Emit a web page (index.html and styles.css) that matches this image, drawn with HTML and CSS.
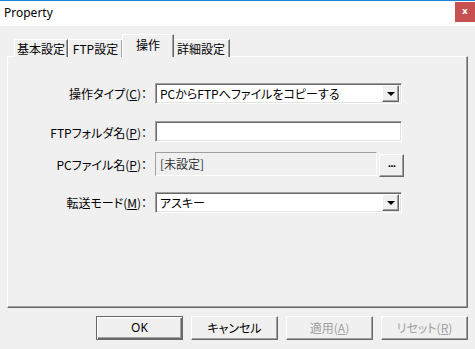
FILE: index.html
```html
<!DOCTYPE html>
<html lang="ja">
<head>
<meta charset="utf-8">
<link rel="stylesheet" href="styles.css">
</head>
<body>
<div class="window">
  <div class="titlebar">
    <span class="title">Property</span>
    <span class="close">x</span>
  </div>
  <div class="client">
    <div class="tabs">
      <div class="tab t1">基本設定</div>
      <div class="tab t2">FTP設定</div>
      <div class="tab active">操作</div>
      <div class="tab t4">詳細設定</div>
    </div>
    <div class="panel">
      <div class="row r1">
        <div class="label">操作タイプ(<u>C</u>)：</div>
        <div class="combo"><span class="val">PCからFTPへファイルをコピーする</span><span class="drop"><i></i></span></div>
      </div>
      <div class="row r2">
        <div class="label">FTPフォルダ名(<u>P</u>)：</div>
        <div class="edit"></div>
      </div>
      <div class="row r3">
        <div class="label">PCファイル名(<u>P</u>)：</div>
        <div class="readonly">[未設定]</div>
        <div class="browse"><span>...</span></div>
      </div>
      <div class="row r4">
        <div class="label">転送モード(<u>M</u>)：</div>
        <div class="combo"><span class="val">アスキー</span><span class="drop"><i></i></span></div>
      </div>
    </div>
    <div class="buttons">
      <div class="btn default">OK</div>
      <div class="btn">キャンセル</div>
      <div class="btn disabled">適用(<u>A</u>)</div>
      <div class="btn disabled">リセット(<u>R</u>)</div>
    </div>
  </div>
</div>
</body>
</html>
```

FILE: styles.css
```css
* { box-sizing: border-box; }
html, body { margin: 0; padding: 0; }
body {
  width: 475px;
  height: 349px;
  overflow: hidden;
  font-family: "Noto Sans CJK JP", "Noto Sans", sans-serif;
  font-size: 12px;
  color: #000;
  font-feature-settings: "palt";
}
.window { width: 475px; height: 349px; background: #f0f0f0; }
.titlebar {
  height: 26px;
  border-top: 1px solid #1883d7;
  background: #fff;
  display: flex;
  align-items: flex-start;
}
.title {
  font-family: "Noto Sans", "Open Sans", sans-serif;
  font-size: 12px;
  margin-left: 4px;
  margin-top: 3px;
  line-height: 18px;
}
.close {
  margin-left: auto;
  margin-top: 1px;
  width: 20px;
  height: 20px;
  background: #c75050;
  color: #fff;
  font-family: "DejaVu Sans", sans-serif;
  font-weight: bold;
  font-size: 9px;
  line-height: 19px;
  text-align: center;
}
.client { padding-left: 7px; }
.tabs {
  display: flex;
  align-items: flex-end;
  height: 23px;
  margin-top: 8px;
  padding-left: 7px;
  margin-bottom: -1px;
  position: relative;
  z-index: 1;
}
.tab {
  height: 18px;
  border-top: 1px solid #fff;
  border-left: 1px solid #fff;
  border-right: 1px solid #696969;
  box-shadow: inset -1px 0 #a0a0a0;
  line-height: 17px;
  text-align: center;
  background: #f0f0f0;
}
.t1 { width: 54px; }
.t2 { width: 55px; margin-right: -1px; }
.active {
  width: 52px;
  height: 23px;
  line-height: 19px;
  position: relative;
  z-index: 2;
  margin-right: -2px;
}
.t4 { width: 58px; }
.panel {
  width: 461px;
  height: 252px;
  border-top: 1px solid #fff;
  border-left: 1px solid #fff;
  border-right: 1px solid #696969;
  border-bottom: 1px solid #696969;
  box-shadow: inset -1px -1px #a0a0a0;
  padding-top: 25px;
  display: flex;
  flex-direction: column;
}
.row {
  display: flex;
  align-items: center;
}
.r1 { height: 22px; }
.r2 { height: 21px; margin-top: 17px; }
.r3 { height: 24px; margin-top: 10px; align-items: flex-start; }
.r4 { height: 22px; margin-top: 15px; }
.label {
  width: 139px;
  margin-right: 8px;
  text-align: right;
  line-height: 16px;
  padding-top: 2px;
  white-space: nowrap;
}
.r3 .label { padding-top: 5px; }
.combo, .edit {
  width: 247px;
  height: 21px;
  background: #fff;
  border: 1px solid;
  border-color: #a0a0a0 #fff #fff #a0a0a0;
  box-shadow: inset 1px 1px #696969, inset -1px -1px #e3e3e3;
  display: flex;
  align-items: center;
}
.val { padding-left: 4px; flex: 1; line-height: 17px; }
.drop {
  width: 17px;
  height: 17px;
  margin-right: 2px;
  background: #f0f0f0;
  border: 1px solid;
  border-color: #fff #696969 #696969 #fff;
  box-shadow: inset -1px -1px #a0a0a0;
  display: flex;
  align-items: center;
  justify-content: center;
}
.drop i {
  width: 0; height: 0;
  border-left: 4px solid transparent;
  border-right: 4px solid transparent;
  border-top: 4px solid #000;
  margin-top: 1px;
}
.readonly {
  width: 222px;
  height: 24px;
  border: 1px solid;
  border-color: #a0a0a0 #fff #fff #a0a0a0;
  padding-left: 4px;
  line-height: 21px;
  color: #333;
}
.browse {
  width: 25px;
  height: 23px;
  margin-top: 2px;
  margin-left: 2px;
  border: 1px solid;
  border-color: #fff #696969 #696969 #fff;
  box-shadow: inset -1px -1px #a0a0a0;
  text-align: center;
  line-height: 18px;
  font-family: "DejaVu Sans", sans-serif;
  font-size: 9px;
  font-weight: bold;
  letter-spacing: -1px;
}
.buttons {
  display: flex;
  gap: 8px;
  justify-content: flex-end;
  padding-right: 7px;
  margin-top: 8px;
}
.btn {
  width: 87px;
  height: 24px;
  border: 1px solid;
  border-color: #fff #696969 #696969 #fff;
  box-shadow: inset -1px -1px #a0a0a0;
  text-align: center;
  line-height: 21px;
}
.btn.default {
  border: 1px solid #696969;
  box-shadow: inset 1px 1px #fff, inset -1px -1px #696969, inset -2px -2px #a0a0a0;
  font-family: "Noto Sans", sans-serif;
}
.btn.disabled { color: #a0a0a0; }
```
